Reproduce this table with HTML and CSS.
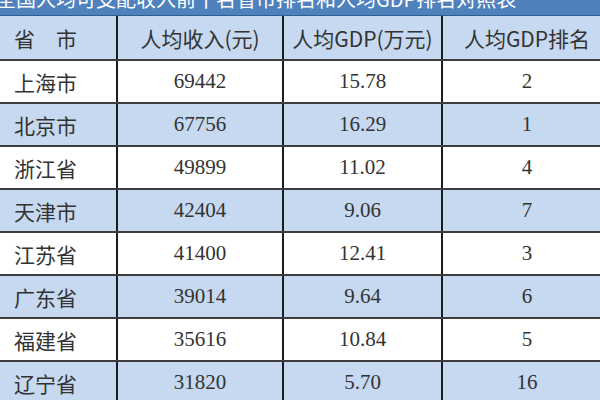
FILE: index.html
```html
<!DOCTYPE html>
<html lang="zh-CN">
<head>
<meta charset="utf-8">
<title>全国人均可支配收入前十名省市排名和人均GDP排名对照表</title>
<link rel="stylesheet" href="styles.css">
</head>
<body>
<div class="page">
  <div class="title"><span>全国人均可支配收入前十名省市排名和人均GDP排名对照表</span></div>
  <table class="data">
    <colgroup>
      <col class="c1"><col class="c2"><col class="c3"><col class="c4">
    </colgroup>
    <thead>
      <tr class="blue"><th class="name">省　市</th><th>人均收入(元)</th><th>人均GDP(万元)</th><th>人均GDP排名</th></tr>
    </thead>
    <tbody>
      <tr class="white"><td class="name">上海市</td><td>69442</td><td>15.78</td><td>2</td></tr>
      <tr class="blue"><td class="name">北京市</td><td>67756</td><td>16.29</td><td>1</td></tr>
      <tr class="white"><td class="name">浙江省</td><td>49899</td><td>11.02</td><td>4</td></tr>
      <tr class="blue"><td class="name">天津市</td><td>42404</td><td>9.06</td><td>7</td></tr>
      <tr class="white"><td class="name">江苏省</td><td>41400</td><td>12.41</td><td>3</td></tr>
      <tr class="blue"><td class="name">广东省</td><td>39014</td><td>9.64</td><td>6</td></tr>
      <tr class="white"><td class="name">福建省</td><td>35616</td><td>10.84</td><td>5</td></tr>
      <tr class="blue"><td class="name">辽宁省</td><td>31820</td><td>5.70</td><td>16</td></tr>
    </tbody>
  </table>
</div>
</body>
</html>
```
FILE: styles.css
```css
html, body {
  margin: 0;
  padding: 0;
  background: #ffffff;
}
body {
  width: 600px;
  height: 400px;
  overflow: hidden;
}
.page {
  width: 612px;
  font-family: "Liberation Serif", "Noto Sans CJK SC", serif;
  color: #333333;
}
.title {
  height: 15px;
  overflow: hidden;
  background: #4f81bd;
  border-bottom: 1px solid #2f5e93;
  color: #ffffff;
  font-family: "Noto Sans CJK SC", sans-serif;
  font-size: 20px;
  white-space: nowrap;
}
.title span {
  display: block;
  line-height: 24px;
  margin-top: -13px;
  margin-left: -4px;
}
.data {
  width: 612px;
  border-collapse: collapse;
  table-layout: fixed;
}
.c1 { width: 117px; }
.c2 { width: 166px; }
.c3 { width: 159px; }
.c4 { width: 170px; }
.data th, .data td {
  height: 41px;
  padding: 0;
  font-size: 21px;
  font-weight: normal;
  text-align: center;
  vertical-align: middle;
  border-top: 2px solid #3d3d3d;
  border-bottom: 2px solid #3d3d3d;
  border-left: 2px solid #1c1c1c;
  border-right: 2px solid #1c1c1c;
  white-space: nowrap;
}
.data th {
  border-top: none;
  height: 43px;
}
.data .name {
  text-align: left;
  padding-left: 14px;
  border-left: none;
  font-family: "Noto Sans CJK SC", sans-serif;
}
.data th:not(.name) {
  font-family: "Noto Sans CJK SC", sans-serif;
}
.blue { background: #c6d9f0; }
.white { background: #ffffff; }
```
